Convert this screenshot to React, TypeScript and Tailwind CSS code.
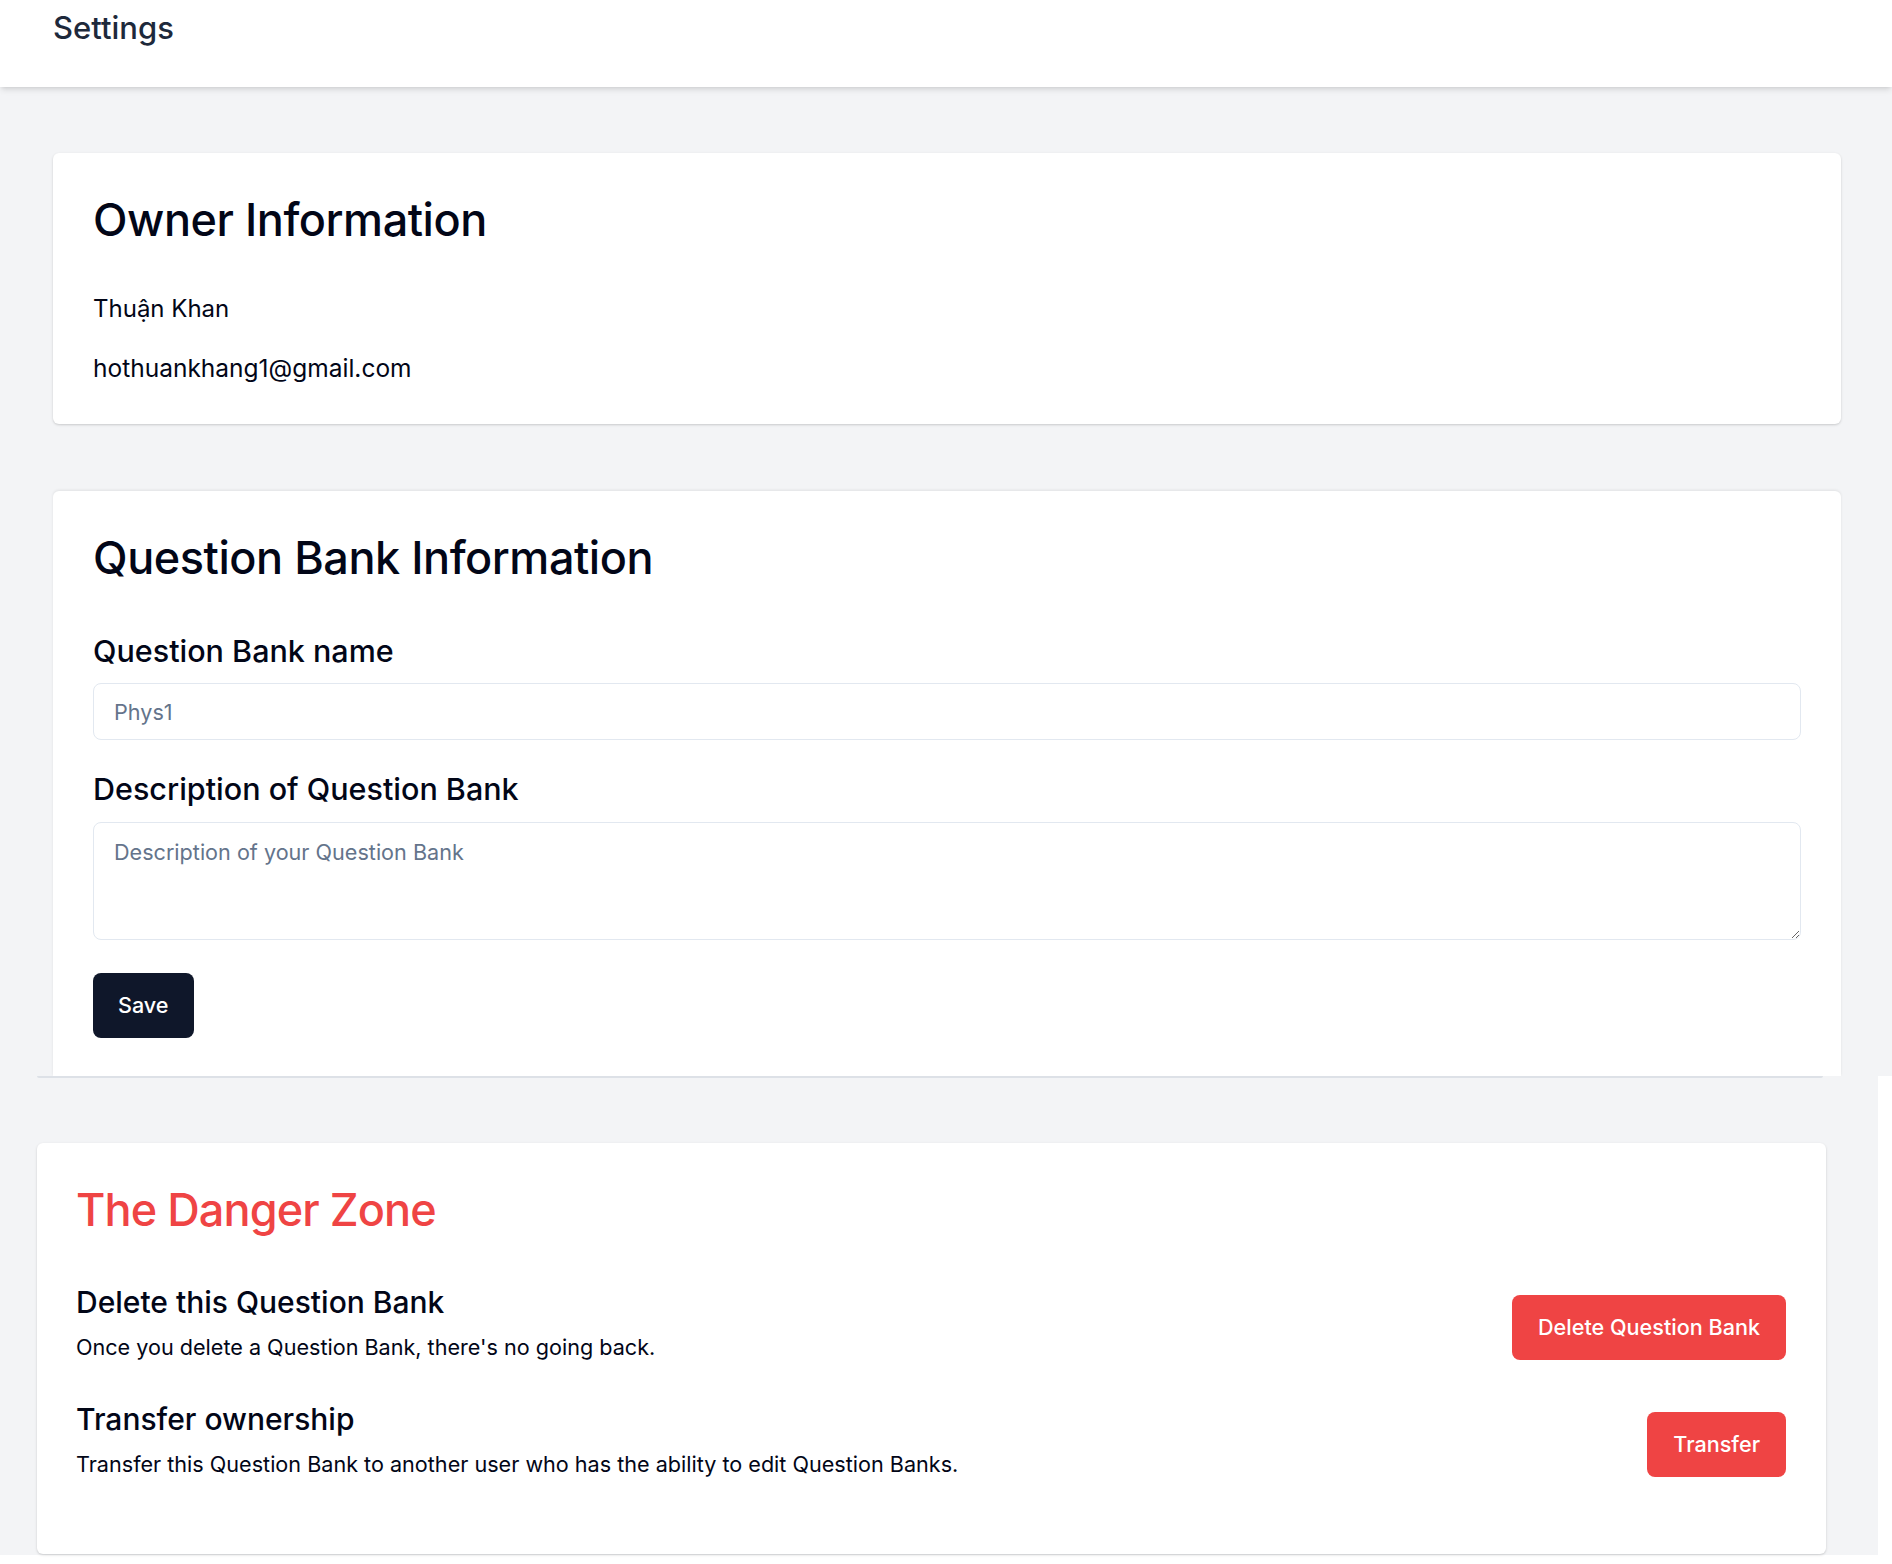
import React from 'react';

const DangerRow: React.FC<{ title: string; text: string; action: string }> = ({ title, text, action }) => (
  <div className="flex items-center justify-between">
    <div>
      <h3 className="text-[30px] leading-[36px] font-medium text-[#020617]">{title}</h3>
      <p className="mt-[12px] text-[21.6px] leading-[30px] text-[#020617]">{text}</p>
    </div>
    <button className="mt-[8px] h-[65px] px-[26px] rounded-lg bg-[#ef4444] text-white text-[21.6px] font-medium">
      {action}
    </button>
  </div>
);

export default function App() {
  return (
    <div className="min-h-screen bg-white font-['Inter','Noto_Sans',sans-serif] text-[#020617]">
      {/* Header */}
      <header className="relative z-10 h-[87px] bg-white shadow-md pl-[53px] pt-[10px]">
        <h1 className="text-[31px] leading-[36px] font-medium text-[#1e293b]">Settings</h1>
      </header>

      <div className="bg-[#f3f4f6] pl-[53px] pr-[51px] pt-[66px]">
        {/* Owner */}
        <section className="mb-[67px] rounded-md bg-white p-10 shadow-[0_1px_3px_rgba(0,0,0,0.12),0_1px_2px_rgba(0,0,0,0.06)]">
          <h2 className="text-[45px] leading-[54px] font-medium tracking-[-0.01em]">Owner Information</h2>
          <p className="mt-[46px] text-[24px] leading-[32px]">Thuận Khan</p>
          <p className="mt-[27px] text-[24.5px] leading-[32px]">hothuankhang1@gmail.com</p>
        </section>

        {/* Question bank */}
        <section className="rounded-t-md bg-white px-10 pt-10 pb-[38px] shadow-[0_-1px_3px_rgba(0,0,0,0.08)]">
          <h2 className="text-[45px] leading-[54px] font-medium tracking-[-0.01em]">Question Bank Information</h2>
          <label className="mt-[48px] block text-[30.5px] leading-[36px] font-medium">Question Bank name</label>
          <input
            placeholder="Phys1"
            className="mt-[14px] block h-[57px] w-full rounded-lg border border-[#e2e8f0] px-[20px] text-[21.6px] outline-none placeholder:text-[#64748b]"
          />
          <label className="mt-[31px] block text-[30.5px] leading-[36px] font-medium">Description of Question Bank</label>
          <textarea
            placeholder="Description of your Question Bank"
            className="mt-[15px] block h-[118px] w-full rounded-lg border border-[#e2e8f0] px-[20px] py-[14px] text-[21.6px] leading-[30px] outline-none placeholder:text-[#64748b]"
          />
          <button className="mt-[33px] h-[65px] px-[25px] rounded-lg bg-[#0f172a] text-white text-[21.6px] font-medium">
            Save
          </button>
        </section>
      </div>

      {/* Danger zone */}
      <div className="w-[1878px] bg-[#f3f4f6] pl-[37px] pr-[52px] pb-px">
        <div className="h-[2px] w-[1786px] rounded-b bg-[#dde1e7]" />
        <section className="mt-[65px] rounded-md bg-white pl-[39px] pr-10 pt-10 pb-[75px] shadow-[0_1px_3px_rgba(0,0,0,0.12),0_1px_2px_rgba(0,0,0,0.06)]">
          <h2 className="text-[45px] leading-[54px] font-medium tracking-[-0.02em] text-[#ef4444]">The Danger Zone</h2>
          <div className="mt-[47px] flex flex-col gap-[39px]">
            <DangerRow
              title="Delete this Question Bank"
              text="Once you delete a Question Bank, there's no going back."
              action="Delete Question Bank"
            />
            <DangerRow
              title="Transfer ownership"
              text="Transfer this Question Bank to another user who has the ability to edit Question Banks."
              action="Transfer"
            />
          </div>
        </section>
      </div>
    </div>
  );
}
